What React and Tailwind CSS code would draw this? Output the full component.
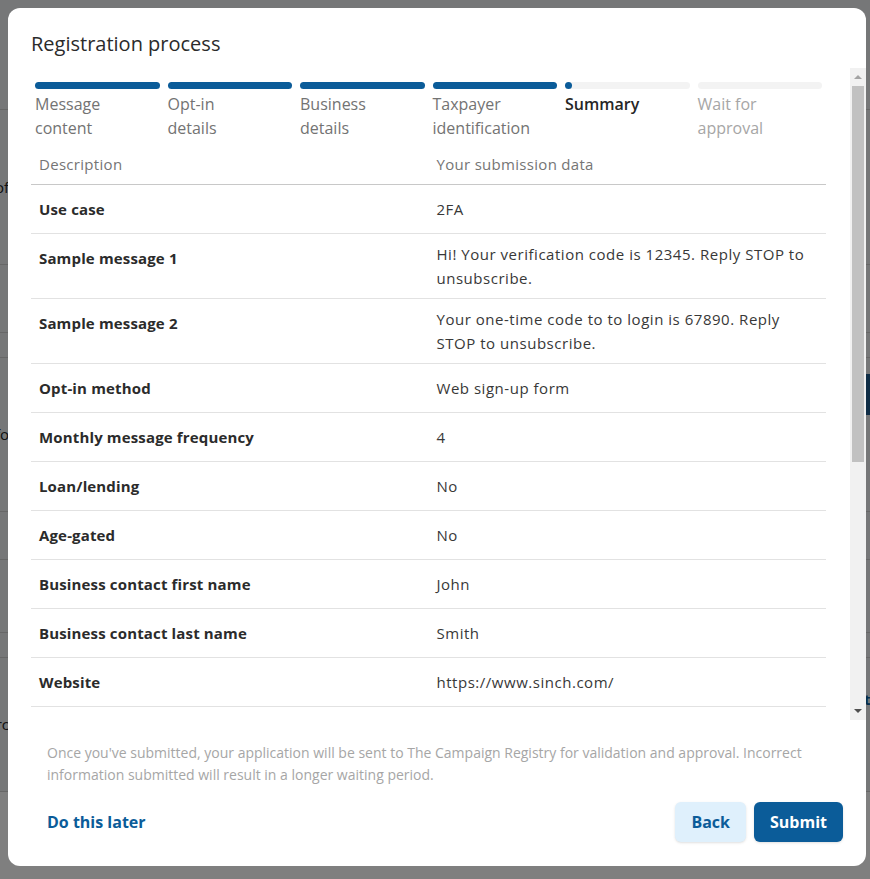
const STEPS = [
  { label: 'Message\ncontent', state: 'done' },
  { label: 'Opt-in\ndetails', state: 'done' },
  { label: 'Business\ndetails', state: 'done' },
  { label: 'Taxpayer\nidentification', state: 'done' },
  { label: 'Summary', state: 'current' },
  { label: 'Wait for\napproval', state: 'todo' },
];

const ROWS = [
  ['Use case', '2FA'],
  ['Sample message 1', 'Hi! Your verification code is 12345. Reply STOP to unsubscribe.'],
  ['Sample message 2', 'Your one-time code to to login is 67890. Reply STOP to unsubscribe.'],
  ['Opt-in method', 'Web sign-up form'],
  ['Monthly message frequency', '4'],
  ['Loan/lending', 'No'],
  ['Age-gated', 'No'],
  ['Business contact first name', 'John'],
  ['Business contact last name', 'Smith'],
  ['Website', 'https://www.sinch.com/'],
  ['Business contact email', 'john.smith@sinch.com'],
  ['Business contact phone', '+1 555 0100'],
  ['Legal company name', 'Sinch AB'],
  ['Tax ID', '12-3456789'],
];

// Page behind the dialog: only slivers of it show at the edges
function BackgroundPage() {
  const rows = [
    { h: 'h-[110px]', left: '', right: null },
    { h: 'h-[155px]', left: 'of', right: null },
    { h: 'h-[68px]', left: '', right: null },
    { h: 'h-[25px]', left: '', right: null },
    { h: 'h-[154px]', left: 'Info', right: 'block' },
    { h: 'h-[48px]', left: '', right: null },
    { h: 'h-[73px]', left: '', right: null },
    { h: 'h-[25px]', left: '', right: null },
    { h: 'h-[134px]', left: 'Arc', right: 'text' },
  ];
  return (
    <div className="flex flex-col bg-[#eceef0]">
      {rows.map((r, i) => (
        <div key={i} className={`${r.h} flex items-start justify-between border-b border-[#cfcfcf]`}>
          <div className="flex h-full w-[9px] items-center justify-end overflow-hidden whitespace-nowrap text-[15px] text-[#222]">
            {r.left}
          </div>
          {r.right === 'block' && <div className="mt-[16px] h-[41px] w-[60px] bg-[#1f5a8c]" />}
          {r.right === 'text' && (
            <div className="mt-[30px] w-[6px] overflow-hidden whitespace-nowrap text-[15px] font-bold text-[#0b5c99]">
              tt
            </div>
          )}
        </div>
      ))}
    </div>
  );
}

function Stepper() {
  return (
    <div className="grid grid-cols-6 gap-2 px-1">
      {STEPS.map((s) => (
        <div key={s.label} className="flex flex-col">
          {s.state === 'done' && <div className="h-[7px] rounded-full bg-[#0b5c99]" />}
          {s.state === 'current' && (
            <div className="h-[7px] rounded-full bg-[#f3f3f3]">
              <div className="h-[7px] w-[7px] rounded-full bg-[#0b5c99]" />
            </div>
          )}
          {s.state === 'todo' && <div className="h-[7px] rounded-full bg-[#f3f3f3]" />}
          <p
            className={
              'mt-[3px] whitespace-pre-line text-base leading-6 ' +
              (s.state === 'done'
                ? 'text-[#737373]'
                : s.state === 'current'
                  ? 'font-semibold text-[#262626]'
                  : 'text-[#a6a6a6]')
            }
          >
            {s.label}
          </p>
        </div>
      ))}
    </div>
  );
}

function SummaryTable() {
  return (
    <div className="mt-1 text-[15px] tracking-[0.02em]">
      <div className="grid grid-cols-2 border-b border-[#c8c8c8] text-[#757575]">
        <div className="px-2 py-2 leading-6">Description</div>
        <div className="px-2 py-2 leading-6">Your submission data</div>
      </div>
      {ROWS.map(([label, value]) => (
        <div key={label} className="grid grid-cols-2 border-b border-[#e2e2e2]">
          <div className="px-2 py-3 font-bold leading-6 tracking-[0.01em] text-[#2b2b2b]">{label}</div>
          <div className="self-center px-2 py-2 leading-6 tracking-[0.035em] text-[#383838]">{value}</div>
        </div>
      ))}
    </div>
  );
}

function Scrollbar() {
  return (
    <div className="flex w-[16px] shrink-0 flex-col bg-[#f1f1f1]">
      <div className="flex h-[18px] items-center justify-center">
        <div className="h-0 w-0 border-x-[4px] border-b-[4px] border-x-transparent border-b-[#a3a3a3]" />
      </div>
      <div className="mx-[2px] h-[376px] bg-[#c1c1c1]" />
      <div className="flex-1" />
      <div className="flex h-[18px] items-center justify-center">
        <div className="h-0 w-0 border-x-[4px] border-t-[4px] border-x-transparent border-t-[#505050]" />
      </div>
    </div>
  );
}

export default function App() {
  return (
    <div className="relative h-[879px] w-[870px] overflow-hidden" style={{ fontFamily: '"Open Sans", "Noto Sans", sans-serif' }}>
      <BackgroundPage />

      <div className="absolute inset-0 bg-black/50 pl-2 pt-2">
        <div className="flex h-[858px] w-[858px] flex-col overflow-hidden rounded-xl bg-white">
          <h2 className="pl-[23px] pt-[22px] text-xl leading-7 text-[#2b2b2b]">Registration process</h2>

          <div className="mt-[10px] flex h-[652px] pl-[23px]">
            <div className="flex-1 overflow-hidden pr-6 pt-[14px]">
              <Stepper />
              <SummaryTable />
            </div>
            <Scrollbar />
          </div>

          <div className="flex flex-col pb-6 pl-[39px] pr-[23px]">
            <p className="mt-[22px] text-sm leading-[22px] text-[#a6a6a6]">
              Once you've submitted, your application will be sent to The Campaign Registry for validation and
              approval. Incorrect information submitted will result in a longer waiting period.
            </p>
            <div className="mt-4 flex items-center justify-between">
              <span className="text-base font-bold text-[#0b5c99]">Do this later</span>
              <div className="flex gap-2">
                <button className="h-10 rounded-md bg-[#dff0fc] px-4 text-base font-bold text-[#0b5c99] shadow-sm">
                  Back
                </button>
                <button className="h-10 rounded-md bg-[#0b5c99] px-4 text-base font-bold text-white shadow-sm">
                  Submit
                </button>
              </div>
            </div>
          </div>
        </div>
      </div>
    </div>
  );
}
